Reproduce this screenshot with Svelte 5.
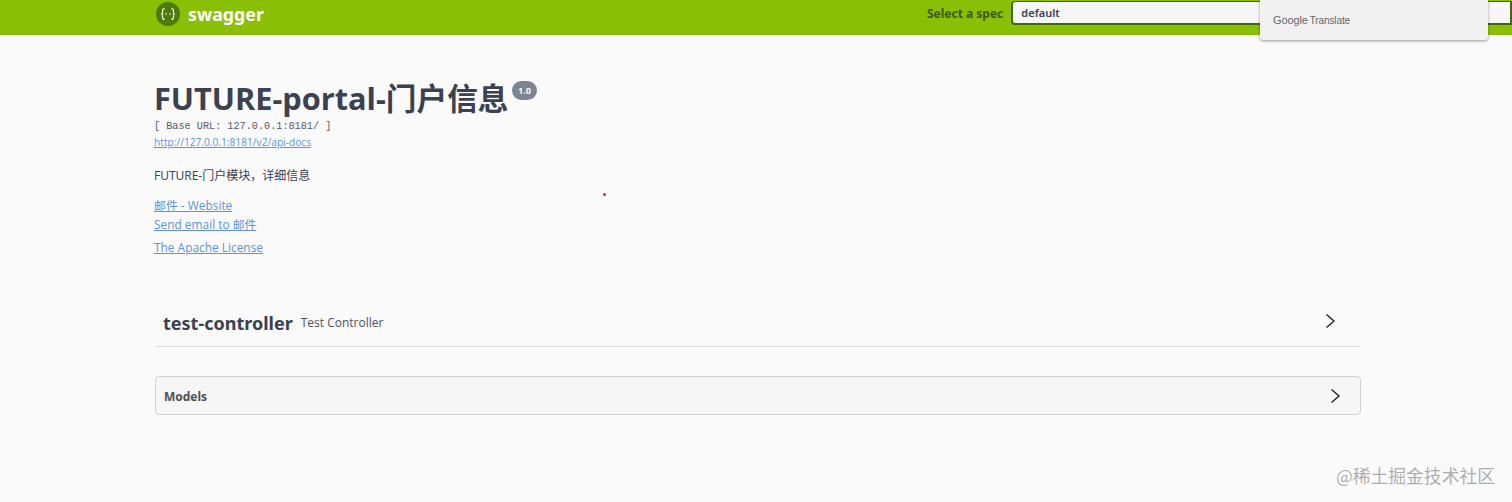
<script lang="ts">
	const links = ['邮件 - Website', 'Send email to 邮件'];
</script>

<div class="page">
	<header class="topbar">
		<div class="wrapper topbar-inner">
			<a class="logo" href="#top">
				<svg viewBox="0 0 24 24" width="24" height="24" aria-hidden="true">
					<circle cx="12" cy="12" r="12" fill="#4f7a0d" />
					<path d="M8.6 6.6c-1.6 0-2 .8-2 2v1.6c0 1-.5 1.6-1.3 1.8.8.2 1.3.8 1.3 1.8v1.6c0 1.2.4 2 2 2M15.4 6.6c1.6 0 2 .8 2 2v1.6c0 1 .5 1.6 1.3 1.8-.8.2-1.3.8-1.3 1.8v1.6c0 1.2-.4 2-2 2" fill="none" stroke="#fff" stroke-width="1.1" />
					<circle cx="10" cy="12" r=".8" fill="#fff" />
					<circle cx="14" cy="12" r=".8" fill="#fff" />
				</svg>
				<span>swagger</span>
			</a>
			<div class="spec">
				<span class="spec-label">Select a spec</span>
				<div class="spec-select">default</div>
			</div>
		</div>
	</header>

	<main class="wrapper">
		<section class="info">
			<h2 class="title">FUTURE-portal-门户信息<span class="version">1.0</span></h2>
			<p class="base-url">[ Base URL: 127.0.0.1:8181/ ]</p>
			<a class="spec-link" href="#top">http://127.0.0.1:8181/v2/api-docs</a>
			<p class="description">FUTURE-门户模块，详细信息</p>
			{#each links as link}
				<a class="contact" href="#top">{link}</a>
			{/each}
			<a class="contact license" href="#top">The Apache License</a>
		</section>

		<section class="tag">
			<h4>test-controller</h4>
			<span>Test Controller</span>
			<svg class="arrow" viewBox="0 0 20 20" width="20" height="20" aria-hidden="true">
				<path d="M6.5 3.5 14 10l-7.5 6.5" fill="none" stroke="#222" stroke-width="1.4" />
			</svg>
		</section>

		<section class="models">
			<h4>Models</h4>
			<svg class="arrow" viewBox="0 0 20 20" width="20" height="20" aria-hidden="true">
				<path d="M6.5 3.5 14 10l-7.5 6.5" fill="none" stroke="#222" stroke-width="1.4" />
			</svg>
		</section>
	</main>

	<div class="translate"><b>Google</b> <span>Translate</span></div>
	<i class="dot"></i>
	<div class="watermark">@稀土掘金技术社区</div>
</div>

<style>
	:global(body) {
		margin: 0;
		background: #fafafa;
	}

	.page {
		position: relative;
		height: 502px;
		overflow: hidden;
		background: #fafafa;
		font-family: "Open Sans", "Noto Sans CJK SC", sans-serif;
		color: #3b4151;
	}

	.wrapper {
		box-sizing: border-box;
		width: 1206px;
		margin-left: 155px;
	}

	.topbar {
		height: 35px;
		background: #89bf04;
	}

	.topbar-inner {
		display: flex;
		align-items: flex-start;
		justify-content: space-between;
		margin-left: 156px;
		width: 1356px;
	}

	.logo {
		display: flex;
		align-items: center;
		gap: 8px;
		height: 27px;
		color: #fff;
		font-family: "Noto Sans", sans-serif;
		font-size: 17.8px;
		font-weight: 700;
		text-decoration: none;
	}

	.spec {
		display: flex;
		align-items: center;
		width: 585px;
		gap: 8px;
		height: 26px;
	}

	.spec-label {
		color: #3f5a16;
		font-family: "Noto Sans", sans-serif;
		font-size: 12px;
		font-weight: 700;
		white-space: nowrap;
	}

	.spec-select {
		box-sizing: border-box;
		flex: 1;
		height: 24px;
		margin-top: -1px;
		padding: 3px 8px 0;
		background: #f7f7f7;
		border: 2px solid #41690b;
		border-top-width: 1px;
		border-radius: 4px 0 0 4px;
		font-family: "Noto Sans", sans-serif;
		font-size: 11px;
		font-weight: 600;
		color: #3b4151;
	}

	.info {
		box-sizing: border-box;
		height: 262px;
		margin-left: -1px;
		padding-top: 41px;
	}

	.title {
		display: flex;
		align-items: flex-start;
		gap: 3px;
		margin: 0;
		font-size: 30.7px;
		line-height: 44px;
		font-weight: 700;
		color: #3b4151;
	}

	.version {
		margin-top: 5px;
		padding: 0 6.5px;
		height: 19px;
		border-radius: 10px;
		background: #7d8492;
		color: #fafafa;
		font-size: 9px;
		line-height: 19px;
	}

	.base-url {
		margin: -1px 0 0;
		font-family: "Liberation Mono", monospace;
		font-size: 10.2px;
		line-height: 15px;
		color: #555a66;
	}

	a {
		display: block;
		width: fit-content;
		color: #5a94dc;
	}

	.spec-link {
		font-size: 10.2px;
		line-height: 17px;
	}

	.description {
		margin: 16px 0 11px;
		font-size: 12px;
		line-height: 18px;
	}

	.contact {
		font-size: 11.9px;
		line-height: 19px;
	}

	.license {
		margin-top: 4px;
	}

	.tag {
		display: flex;
		align-items: center;
		height: 50px;
		box-sizing: border-box;
		padding: 2px 21px 0 8px;
		border-bottom: 1px solid #d8dade;
	}

	.tag h4 {
		margin: 0 8px 0 0;
		font-family: "Noto Sans", sans-serif;
		font-size: 18px;
		font-weight: 700;
	}

	.tag span {
		font-size: 12px;
		color: #4d525e;
	}

	.tag .arrow {
		margin-left: auto;
		margin-top: -3px;
	}

	.models {
		display: flex;
		align-items: center;
		justify-content: space-between;
		box-sizing: border-box;
		height: 39px;
		margin-top: 29px;
		padding: 0 15px 0 8px;
		background: #f6f6f6;
		border: 1px solid #cfd1d4;
		border-radius: 4px;
	}

	.models h4 {
		margin: 2px 0 0;
		font-size: 12px;
		font-weight: 700;
		color: #505050;
	}

	.translate {
		position: absolute;
		top: 0;
		left: 1260px;
		box-sizing: border-box;
		width: 228px;
		height: 40px;
		padding: 14px 0 0 13px;
		background: #f1f1f1;
		border-radius: 0 0 3px 3px;
		box-shadow: 0 1px 3px rgba(0, 0, 0, 0.4);
		font-family: "Liberation Sans", sans-serif;
		font-size: 10px;
		color: #666;
	}

	.translate b {
		font-size: 11px;
		font-weight: 400;
		letter-spacing: -0.1px;
	}

	.translate span {
		margin-left: -1px;
		letter-spacing: -0.1px;
	}

	.dot {
		position: absolute;
		left: 603px;
		top: 193px;
		width: 3px;
		height: 3px;
		border-radius: 50%;
		background: #e0262c;
	}

	.watermark {
		position: absolute;
		right: 17px;
		top: 463px;
		font-family: "Noto Sans CJK SC", sans-serif;
		font-size: 17.8px;
		line-height: 24px;
		color: rgba(120, 120, 120, 0.6);
	}
</style>
